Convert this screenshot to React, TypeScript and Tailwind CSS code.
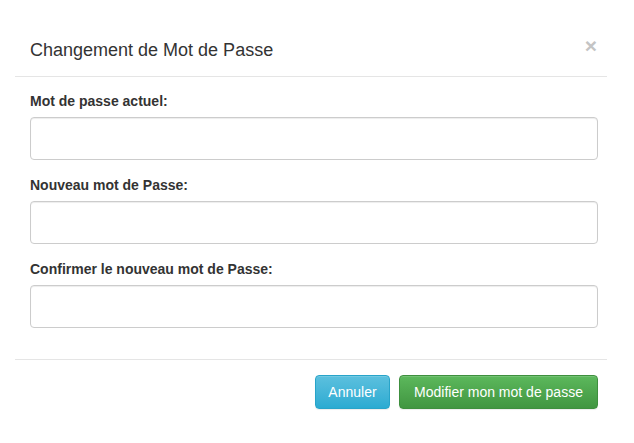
export default function App() {
  const fields = [
    "Mot de passe actuel:",
    "Nouveau mot de Passe:",
    "Confirmer le nouveau mot de Passe:",
  ]

  return (
    <div className="min-h-screen w-[634px] h-[443px] bg-white font-['Liberation_Sans',Arial,sans-serif] text-[#333]">
      <div className="ml-[15px] pt-[24px] w-[592px]">
        {/* header */}
        <div className="flex items-center justify-between h-[53px] pl-[15px] pr-[9px] border-b border-[#e5e5e5]">
          <h4 className="text-[18px] leading-[26px] text-[#333]">
            Changement de Mot de Passe
          </h4>
          <button className="text-[21px] leading-none font-bold text-[#c4c4c4] -mt-[10px] mr-[1px]">
            ×
          </button>
        </div>

        {/* body */}
        <div className="pl-[15px] pr-[9px] pt-[14px] pb-[15px]">
          {fields.map((label) => (
            <div key={label} className="mb-[15px] last:mb-[16px]">
              <label className="block text-[14px] leading-[20px] font-bold mb-[6px] text-[#333]">
                {label}
              </label>
              <input
                type="password"
                className="block w-full h-[43px] rounded-[4px] border border-[#cccccc] bg-white shadow-[inset_0_1px_1px_rgba(0,0,0,0.075)] outline-none"
              />
            </div>
          ))}
        </div>

        {/* footer */}
        <div className="flex justify-end gap-[9px] pt-[15px] pl-[15px] pr-[9px] border-t border-[#e5e5e5]">
          <button className="h-[34px] w-[75px] rounded-[4px] border border-[#28a4c9] bg-gradient-to-b from-[#5bc0de] to-[#2aabd2] text-white text-[14px] shadow-[inset_0_1px_0_rgba(255,255,255,0.15),0_1px_1px_rgba(0,0,0,0.075)]">
            Annuler
          </button>
          <button className="h-[34px] w-[199px] rounded-[4px] border border-[#3e8f3e] bg-gradient-to-b from-[#5cb85c] to-[#419641] text-white text-[14px] shadow-[inset_0_1px_0_rgba(255,255,255,0.15),0_1px_1px_rgba(0,0,0,0.075)]">
            Modifier mon mot de passe
          </button>
        </div>
      </div>
    </div>
  )
}
